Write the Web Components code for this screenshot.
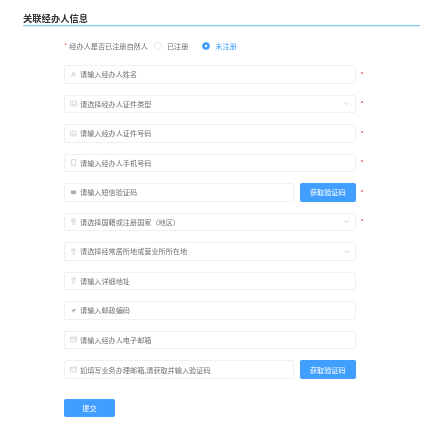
<!DOCTYPE html>
<html lang="zh">
<head>
<meta charset="utf-8">
<title>关联经办人信息</title>
<style>
html,body{margin:0;padding:0;background:#fff;}
body{font-family:"Noto Sans CJK SC","Liberation Sans",sans-serif;color:#606266;}
</style>
</head>
<body>
<agent-form>
    <section-title slot="title">关联经办人信息</section-title>
    <radio-row slot="radio" label="经办人是否已注册自然人"></radio-row>
    <form-field icon="user" placeholder="请输入经办人姓名" required></form-field>
    <form-field icon="card" placeholder="请选择经办人证件类型" select required></form-field>
    <form-field icon="card" placeholder="请输入经办人证件号码" required></form-field>
    <form-field icon="phone" placeholder="请输入经办人手机号码" required></form-field>
    <form-field icon="msg" placeholder="请输入短信验证码" action="获取验证码" required></form-field>
    <form-field icon="globe" placeholder="请选择国籍或注册国家（地区）" select required></form-field>
    <form-field icon="pin" placeholder="请选择经常居所地或营业所所在地" select></form-field>
    <form-field icon="pin" placeholder="请输入详细地址"></form-field>
    <form-field icon="send" placeholder="请输入邮政编码"></form-field>
    <form-field icon="mail" placeholder="请输入经办人电子邮箱"></form-field>
    <form-field icon="mail" placeholder="如填写业务办理邮箱,请获取并输入验证码" action="获取验证码"></form-field>
    <blue-button slot="submit" wide>提交</blue-button>
</agent-form>

<script>
const ICONS = {
    user: '<circle cx="6" cy="4" r="2.2"/><path d="M2 10.5c.4-2.6 2-3.8 4-3.8s3.600 1.200 4 3.800"/>',
    card: '<rect x="1" y="2" width="10" height="8" rx=".6"/><path d="M3.500 5h2M3.500 7.500h5"/>',
    phone: '<rect x="2.500" y="1" width="7" height="10" rx=".8"/><path d="M5.500 9h1"/>',
    msg: '<path fill="#a9acb3" stroke="none" d="M1.500 2.500h9v6H5l-1.500 1.500V8.500h-2z"/>',
    globe: '<circle cx="6" cy="5" r="3.400"/><circle cx="6" cy="5" r="1.300"/><path d="M3.500 10.500h5"/>',
    pin: '<path d="M6 1a3.200 3.200 0 0 1 3.200 3.200C9.200 6.400 6 9 6 9S2.800 6.400 2.800 4.200A3.200 3.200 0 0 1 6 1z"/><circle cx="6" cy="4.200" r="1"/><path d="M3.500 10.800h5"/>',
    send: '<path fill="#a9acb3" stroke="none" d="M11 2 1.500 5.800l3 1.200.7 3.200 1.700-2.200z"/>',
    mail: '<rect x="1" y="2" width="10" height="8" rx=".6"/><path d="M1.300 2.600 6 6.300l4.700-3.700"/>'
};

class SectionTitle extends HTMLElement{
    constructor(){
        super();
        this.attachShadow({mode: 'open'});
        this.shadowRoot.innerHTML = `
            <style>
                :host{
                    display: block;
                    font-size: 9.3px;
                    font-weight: 700;
                    line-height: 13px;
                    color: #303133;
                    border-bottom: 1px solid #7cc8f7;
                    box-shadow: 0 1px 0 #dff2fd;
                }
                span{display: block; height: 13px; filter: blur(.2px);}
            </style>
            <span><slot></slot></span>
        `;
    }
}
customElements.define('section-title', SectionTitle);

class RadioRow extends HTMLElement{
    constructor(){
        super();
        this.attachShadow({mode: 'open'});
    }
    connectedCallback(){
        this.shadowRoot.innerHTML = `
            <style>
                :host{
                    display: flex;
                    align-items: center;
                    height: 12px;
                    font-size: 7.15px;
                    color: #6a6d73;
                }
                .star{color: #f56c6c; margin-right: 2px;}
                .label{margin-right: 6px; filter: blur(.25px);}
                .radio{
                    width: 6px;
                    height: 6px;
                    border-radius: 50%;
                    border: 1px solid #e6e8ee;
                    background: #fff;
                    margin-right: 5px;
                    box-sizing: content-box;
                }
                .radio.on{
                    border-color: #409eff;
                    background: radial-gradient(circle, #fff 0 1.200px, #409eff 1.600px);
                }
                .text{margin-right: 14px; filter: blur(.25px);}
                .text.on{color: #409eff;}
            </style>
            <span class="star">*</span>
            <span class="label">${this.getAttribute('label')}</span>
            <span class="radio"></span><span class="text">已注册</span>
            <span class="radio on"></span><span class="text on">未注册</span>
        `;
    }
}
customElements.define('radio-row', RadioRow);

class BlueButton extends HTMLElement{
    constructor(){
        super();
        this.attachShadow({mode: 'open'});
        this.shadowRoot.innerHTML = `
            <style>
                :host{
                    display: inline-flex;
                    align-items: center;
                    justify-content: center;
                    box-sizing: border-box;
                    width: 56.500px;
                    height: 18.700px;
                    background: #409eff;
                    color: #fff;
                    border-radius: 2px;
                    font-size: 7.15px;
                }
                :host([wide]){width: 51px;}
                span{filter: blur(.25px);}
            </style>
            <span><slot></slot></span>
        `;
    }
}
customElements.define('blue-button', BlueButton);

class FormField extends HTMLElement{
    constructor(){
        super();
        this.attachShadow({mode: 'open'});
    }
    connectedCallback(){
        const icon = ICONS[this.getAttribute('icon')] || '';
        const action = this.getAttribute('action');
        const arrow = this.hasAttribute('select')
            ? '<svg class="arrow" viewBox="0 0 8 8"><path d="M1.500 2.800 4 5.300l2.500-2.500"/></svg>' : '';
        const button = action ? `<blue-button>${action}</blue-button>` : '';
        this.shadowRoot.innerHTML = `
            <style>
                :host{
                    display: grid;
                    grid-template-columns: 292px 1fr;
                    align-items: center;
                    height: 18.700px;
                    font-size: 7.15px;
                }
                .line{display: flex; gap: 5.300px; min-width: 0;}
                .box{
                    flex: 1;
                    min-width: 0;
                    display: flex;
                    align-items: center;
                    box-sizing: border-box;
                    height: 18.700px;
                    padding: 0 5px;
                    background: #fff;
                    border: 1px solid #eef0f4;
                    border-radius: 1.500px;
                    color: #6e7177;
                    white-space: nowrap;
                }
                .icon{
                    width: 7px;
                    height: 7px;
                    margin-right: 3px;
                    flex: none;
                    fill: none;
                    stroke: #b3b6bc;
                    stroke-width: .9;
                }
                .text{flex: 1; filter: blur(.25px);}
                .arrow{
                    width: 7px;
                    height: 7px;
                    flex: none;
                    fill: none;
                    stroke: #b4b8c0;
                    stroke-width: .8;
                }
                .star{
                    width: 2px;
                    height: 2px;
                    margin: -3.500px 0 0 5px;
                    background: #f56c6c;
                    border-radius: 50%;
                    visibility: hidden;
                }
                :host([required]) .star{visibility: visible;}
            </style>
            <div class="line">
                <div class="box">
                    <svg class="icon" viewBox="0 0 12 12">${icon}</svg>
                    <span class="text">${this.getAttribute('placeholder')}</span>
                    ${arrow}
                </div>
                ${button}
            </div>
            <span class="star"></span>
        `;
    }
}
customElements.define('form-field', FormField);

class AgentForm extends HTMLElement{
    constructor(){
        super();
        this.attachShadow({mode: 'open'});
        this.shadowRoot.innerHTML = `
            <style>
                :host{
                    display: block;
                    padding: 12px 6px 0 23px;
                }
                .body{
                    padding: 13.500px 0 0 41px;
                    display: flex;
                    flex-direction: column;
                }
                .fields{
                    display: grid;
                    gap: 10.830px;
                    margin-top: 13.500px;
                }
                .submit{margin-top: 13px;}
            </style>
            <slot name="title"></slot>
            <div class="body">
                <slot name="radio"></slot>
                <div class="fields"><slot></slot></div>
                <div class="submit"><slot name="submit"></slot></div>
            </div>
        `;
    }
}
customElements.define('agent-form', AgentForm);
</script>
</body>
</html>
